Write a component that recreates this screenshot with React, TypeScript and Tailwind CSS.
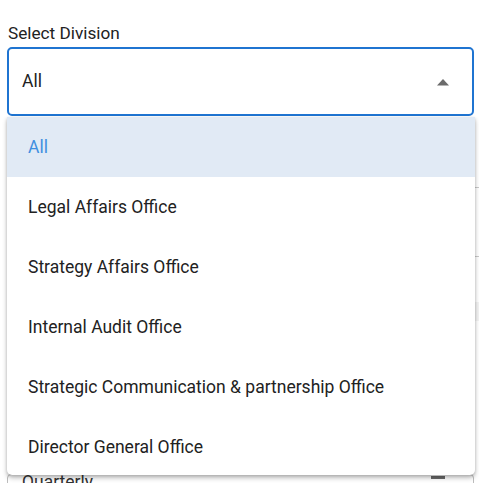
import React from "react";

const items = [
  "All",
  "Legal Affairs Office",
  "Strategy Affairs Office",
  "Internal Audit Office",
  "Strategic Communication & partnership Office",
  "Director General Office",
];

export default function App() {
  return (
    <div
      className="relative w-[479px] h-[483px] overflow-hidden bg-white text-[#212121]"
      style={{ fontFamily: "Roboto, 'Liberation Sans', sans-serif" }}
    >
      <div className="pt-[22px] px-[7px]">
        <div className="pl-px text-[17.2px] leading-[22px] text-[#222]">Select Division</div>
        <div className="mt-[3px] h-[69px] w-[467px] rounded-[5px] border-2 border-[#1f74d1] flex items-center pl-[13px] pr-[22px]">
          <span className="flex-1 text-[17.5px] text-[#222]">All</span>
          <svg width="14" height="8" viewBox="0 0 14 8">
            <path d="M1 7.5 L7 1 L13 7.5 Z" fill="#6b6b6b" />
          </svg>
        </div>
        {/* underlying page content */}
        <div className="mt-[71px] h-px w-[472px] bg-[#c8c8c8]" />
        <div className="mt-[68px] h-px w-[472px] bg-[#c8c8c8]" />
        <div className="mt-[45px] h-[19px] w-[472px] bg-[#f3f3f3]" />
        <div className="mt-[153px] h-[40px] w-[467px] rounded-[4px] border border-[#bdbdbd] flex items-start pl-[14px] pr-[28px]">
          <span className="flex-1 -mt-[6px] text-[17.5px] text-[#333]">Quarterly</span>
          <div className="mt-[1px] w-[14px] h-[3px] bg-[#6b6b6b]" />
        </div>
      </div>

      {/* dropdown menu */}
      <div className="absolute left-[7px] top-[117px] w-[468px] h-[358px] bg-white rounded-b-[5px] overflow-hidden shadow-[0_3px_5px_rgba(0,0,0,0.25),0_1px_3px_rgba(0,0,0,0.15)]">
        {items.map((it, i) => (
          <div
            key={it}
            className={
              "h-[60px] flex items-center pl-[21px] text-[17.5px] " +
              (i === 0 ? "bg-[#e1eaf5] text-[#3f8fe0]" : "text-[#222]")
            }
          >
            {it}
          </div>
        ))}
      </div>
    </div>
  );
}
